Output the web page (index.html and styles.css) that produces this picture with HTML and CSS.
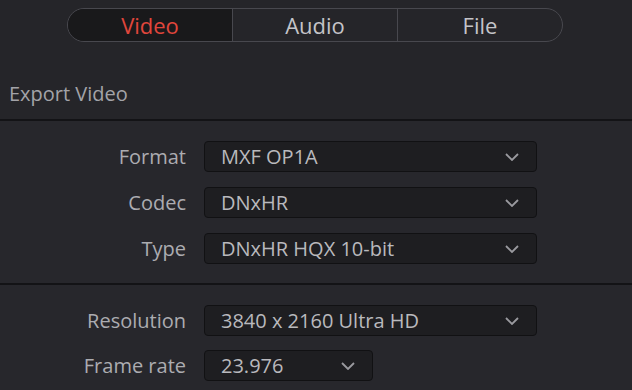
FILE: index.html
```html
<!DOCTYPE html>
<html lang="en">
<head>
    <meta charset="UTF-8">
    <meta name="viewport" content="width=device-width, initial-scale=1.0">
    <title>Render Settings</title>
    <link rel="stylesheet" href="styles.css">
</head>
<body>
    <div class="panel">
        <div class="header">
            <div class="tabs">
                <div class="tab active">Video</div>
                <div class="tab">Audio</div>
                <div class="tab">File</div>
            </div>
            <div class="section-title">Export Video</div>
        </div>

        <div class="section">
            <div class="row">
                <label>Format</label>
                <div class="select"><span>MXF OP1A</span><svg class="chev" width="14" height="8" viewBox="0 0 14 8"><path d="M1 1l6 6 6-6"/></svg></div>
            </div>
            <div class="row">
                <label>Codec</label>
                <div class="select"><span>DNxHR</span><svg class="chev" width="14" height="8" viewBox="0 0 14 8"><path d="M1 1l6 6 6-6"/></svg></div>
            </div>
            <div class="row">
                <label>Type</label>
                <div class="select"><span>DNxHR HQX 10-bit</span><svg class="chev" width="14" height="8" viewBox="0 0 14 8"><path d="M1 1l6 6 6-6"/></svg></div>
            </div>
        </div>

        <div class="section second">
            <div class="row">
                <label>Resolution</label>
                <div class="select"><span>3840 x 2160 Ultra HD</span><svg class="chev" width="14" height="8" viewBox="0 0 14 8"><path d="M1 1l6 6 6-6"/></svg></div>
            </div>
            <div class="row">
                <label>Frame rate</label>
                <div class="select small"><span>23.976</span><svg class="chev" width="14" height="8" viewBox="0 0 14 8"><path d="M1 1l6 6 6-6"/></svg></div>
            </div>
        </div>
    </div>
</body>
</html>
```

FILE: styles.css
```css
body {
    margin: 0;
    padding: 0;
    background-color: #27272c;
    font-family: "Open Sans", Roboto, sans-serif;
    color: #a9a9ae;
    overflow: hidden;
}
.panel {
    width: 632px;
    height: 390px;
}
.header {
    height: 119px;
    box-sizing: border-box;
    padding-top: 8px;
    background-color: #252529;
}
.tabs {
    display: flex;
    margin-left: 67px;
    width: 496px;
    height: 34px;
    box-sizing: border-box;
    border: 1px solid #48484e;
    border-radius: 17px;
    overflow: hidden;
}
.tab {
    flex: 1;
    display: flex;
    align-items: center;
    justify-content: center;
    font-size: 22px;
    color: #c4c4c8;
    border-left: 1px solid #48484e;
}
.tab:first-child {
    border-left: none;
}
.tab.active {
    background-color: #19191b;
    color: #e0463c;
}
.section-title {
    margin-top: 38px;
    padding-left: 9px;
    font-size: 20px;
    line-height: 27px;
    color: #a3a3a8;
}
.section {
    border-top: 2px solid #131316;
    padding-top: 20px;
    padding-bottom: 19px;
    display: flex;
    flex-direction: column;
    gap: 15px;
}
.section.second {
    padding-top: 20px;
    gap: 14px;
}
.row {
    display: grid;
    grid-template-columns: 186px auto;
    column-gap: 18px;
    align-items: center;
}
label {
    text-align: right;
    font-size: 20px;
    color: #acacb1;
}
.select {
    width: 333px;
    height: 31px;
    box-sizing: border-box;
    display: flex;
    align-items: center;
    justify-content: space-between;
    padding: 0 17px 0 16px;
    background-color: #1e1e21;
    border: 1px solid #111113;
    border-radius: 4px;
    font-size: 20px;
    color: #b9b9bd;
}
.select.small {
    width: 169px;
}
.chev {
    fill: none;
    stroke: #9a9a9f;
    stroke-width: 1.8;
}
```
